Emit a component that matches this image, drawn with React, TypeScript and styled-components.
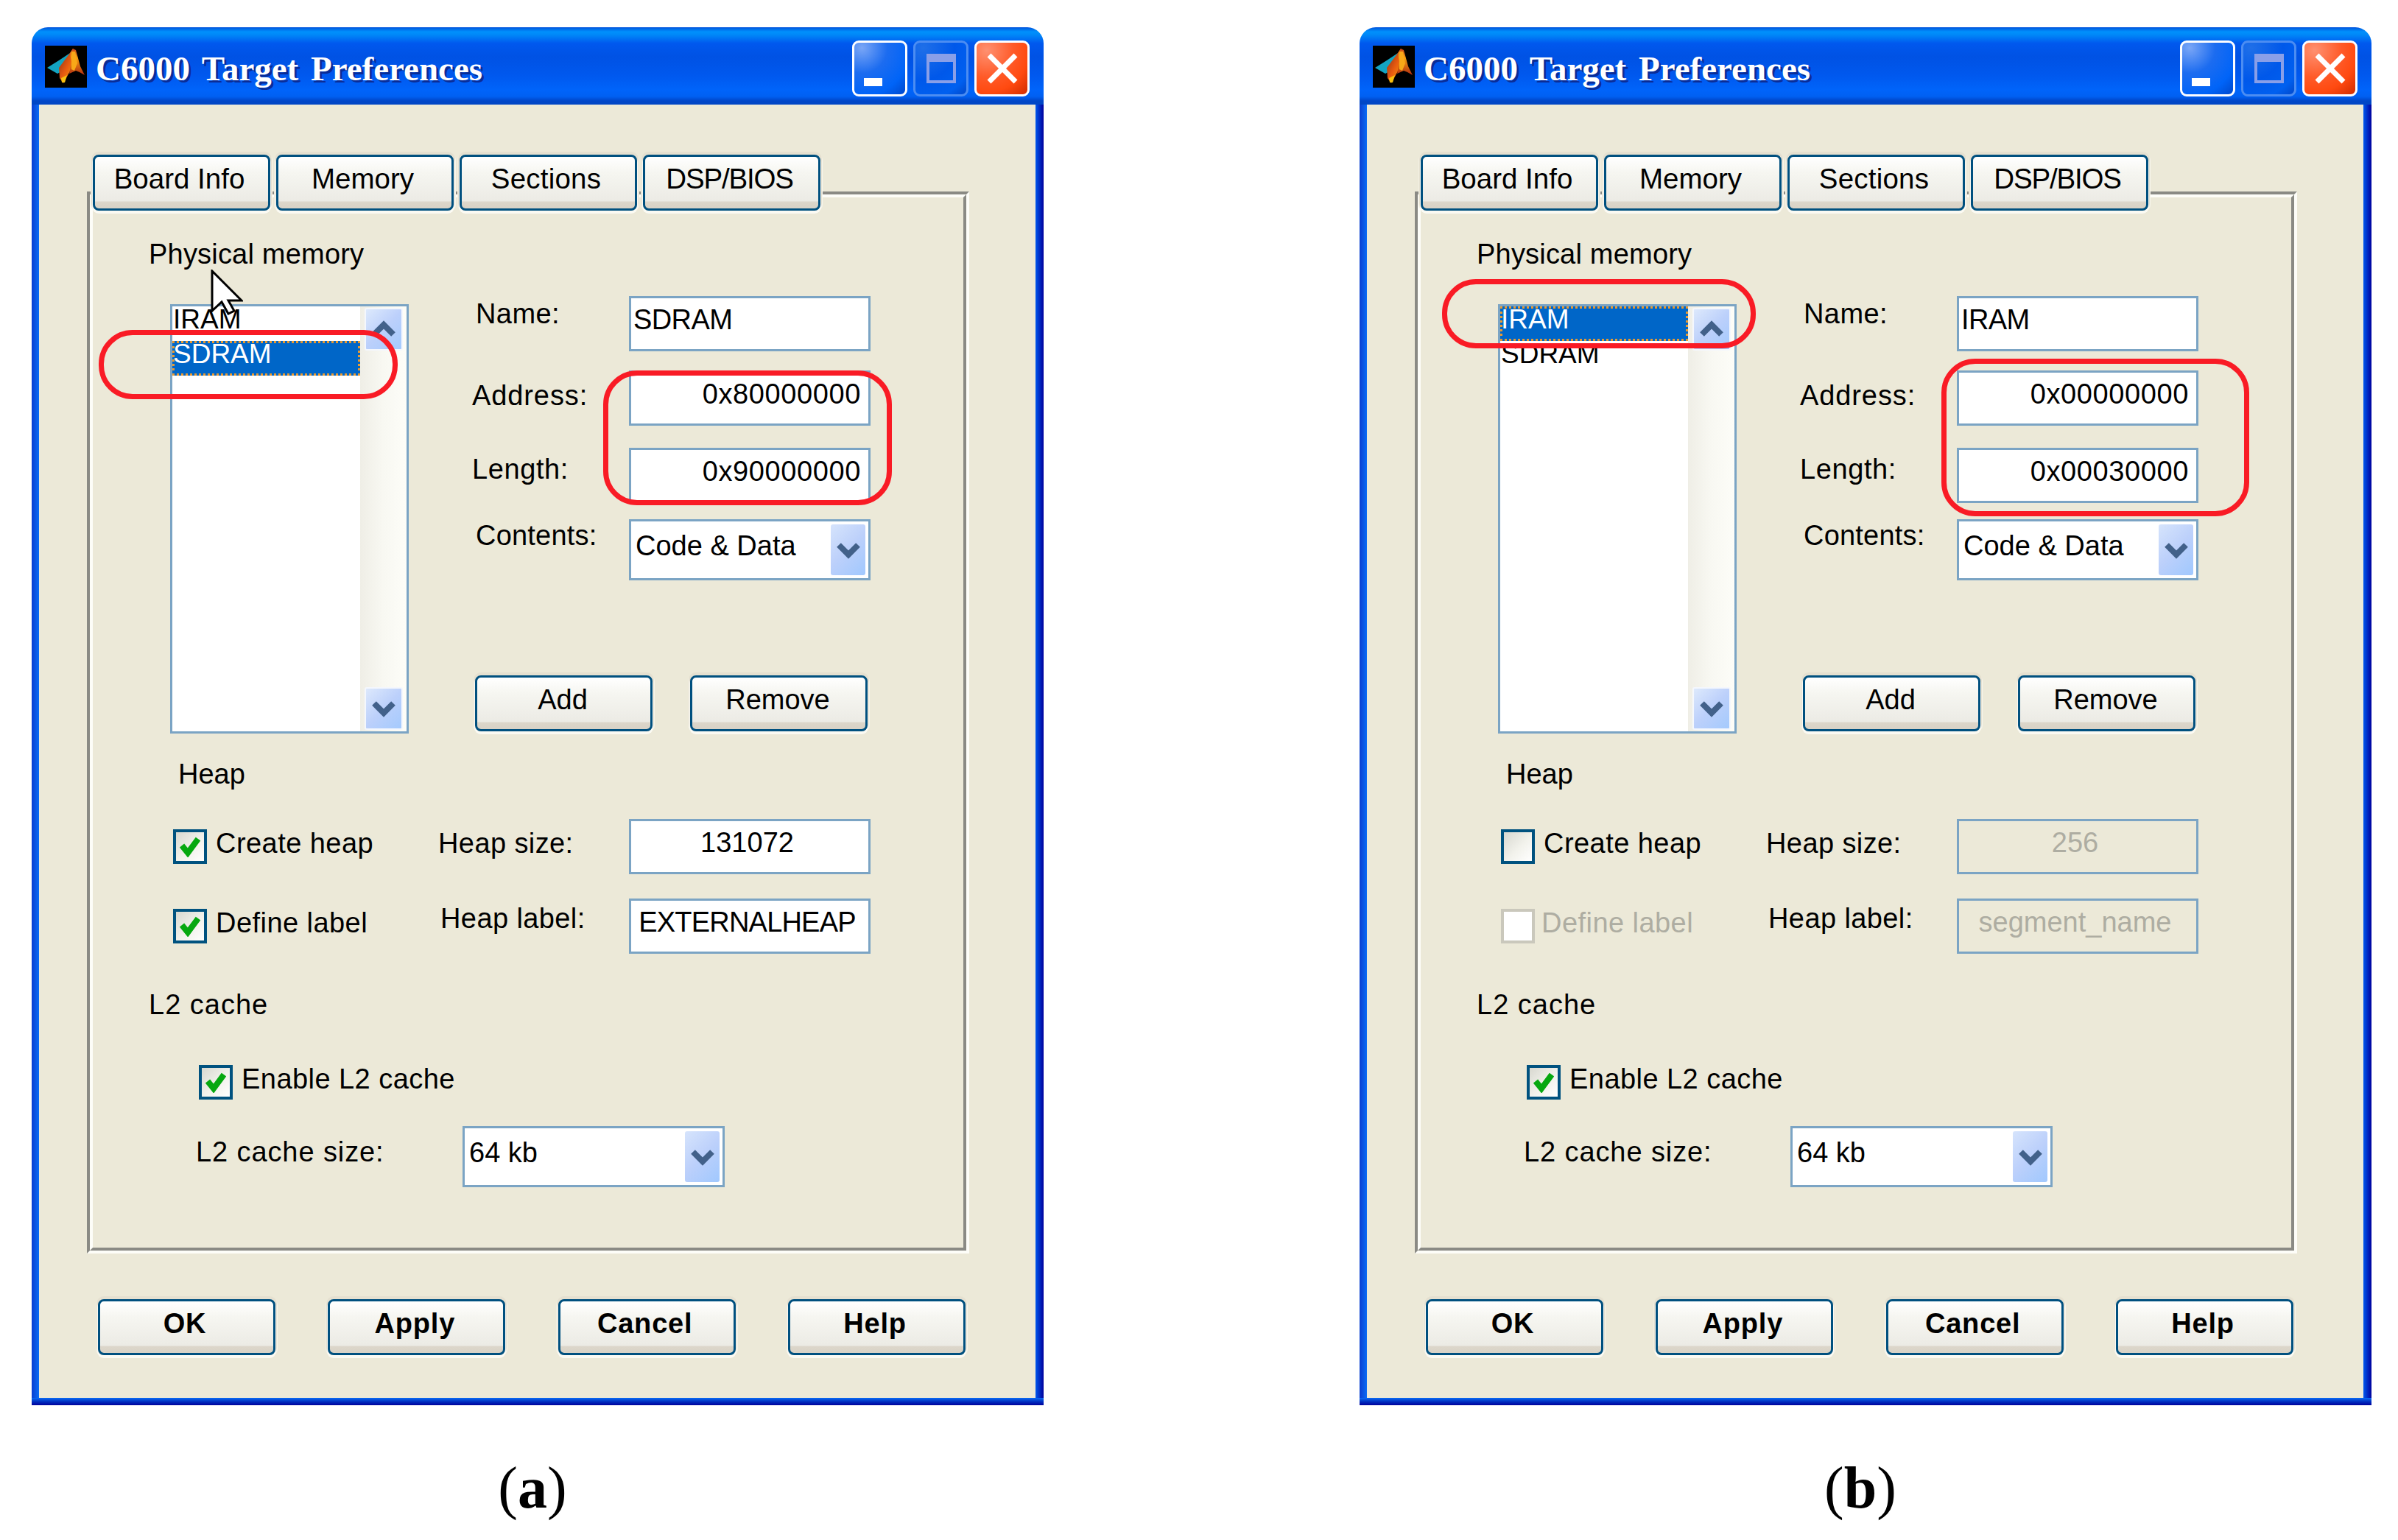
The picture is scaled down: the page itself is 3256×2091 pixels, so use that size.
import React from 'react'
import styled, { createGlobalStyle } from 'styled-components'

const GlobalStyle = createGlobalStyle`
    html, body {
        margin: 0;
        padding: 0;
        background: #fff;
    }
    * {
        box-sizing: border-box;
    }
`;

const Page = styled.div`
    display: flex;
    gap: 429px;
    width: 3256px;
    height: 2091px;
    padding: 37px 0 0 43px;
    overflow: hidden;
    font-family: "Liberation Sans", Arial, sans-serif;
    font-size: 38px;
    line-height: 44px;
    color: #000;
`;

const Figure = styled.div`
    display: flex;
    flex-direction: column;
    align-items: center;
    width: 1374px;
`;

const Caption = styled.div`
    margin: 66px 14px 0 0;
    font-family: "Liberation Serif", "Times New Roman", serif;
    font-size: 80px;
    line-height: 92px;

    b {
        font-weight: bold;
    }
`;

const Window = styled.div`
    position: relative;
    width: 1374px;
    height: 1871px;
    display: flex;
    flex-direction: column;
`;

const TitleBar = styled.div`
    height: 105px;
    flex: none;
    display: flex;
    align-items: center;
    padding: 18px 19px 11px 18px;
    border-radius: 22px 22px 0 0;
    background: linear-gradient(180deg,
        #0052dc 0px, #0090fc 6px, #0089f8 10px, #0058ee 22px, #0052e4 40px,
        #0058ee 65px, #0064fa 85px, #0060f2 94px, #0046c8 100px, #0046c4 105px);
`;

const LogoBox = styled.svg`
    width: 57px;
    height: 57px;
    flex: none;
    margin: -5px 12px 0 0;
`;

const TitleText = styled.div`
    flex: 1;
    font-family: "Liberation Serif", "Times New Roman", serif;
    font-weight: bold;
    font-size: 47px;
    word-spacing: 5px;
    line-height: 52px;
    color: #fff;
    text-shadow: 3px 3px 0 #0a2c96;
    white-space: nowrap;
`;

const CaptionButtons = styled.div`
    display: flex;
    gap: 8px;
`;

const CaptionButton = styled.div<{ $kind: 'min' | 'max' | 'close' }>`
    width: 75px;
    height: 76px;
    border-radius: 9px;
    border: 3px solid ${p => (p.$kind === 'max' ? '#4c8df2' : '#fdfdff')};
    display: flex;
    align-items: center;
    justify-content: center;
    background: ${p => {
        if (p.$kind === 'close') {
            return 'radial-gradient(circle at 20% 15%, #ff9070 0, #ff5a28 45%, #ff4a10 70%, #d02c00 100%)'
        }
        if (p.$kind === 'max') {
            return 'radial-gradient(circle at 15% 10%, #1f6fe8 0, #0058ea 50%, #0060f0 80%, #0048cc 100%)'
        }
        return 'radial-gradient(circle at 15% 10%, #7aa6f6 0, #1c6cf0 40%, #0064f8 75%, #0048cc 100%)'
    }};
`;

const MinGlyph = styled.div`
    width: 25px;
    height: 11px;
    background: #fff;
    margin: 36px 0 0 -18px;
`;

const MaxGlyph = styled.div`
    width: 40px;
    height: 40px;
    border: 4px solid #8a9fe8;
    border-top-width: 11px;
`;

const Frame = styled.div`
    flex: 1;
    display: flex;
    padding: 0 11px 10px 10px;
    background:
        linear-gradient(0deg, #00009c 0, #0030c0 5px, #0a6cf5 10px) bottom / 100% 10px no-repeat,
        linear-gradient(90deg, #0a3ed0, #0a6cf5) left / 10px 100% no-repeat,
        linear-gradient(90deg, #0058ee, #00009c) right / 11px 100% no-repeat;
`;

const Client = styled.div`
    flex: 1;
    background: #ece9d8;
    padding: 68px 0 0 65px;
`;

const TabRow = styled.div`
    position: relative;
    z-index: 1;
    display: flex;
    gap: 8px;
    margin: 0 0 -26px 8px;
`;

const Raised = styled.div<{ $bold?: boolean }>`
    width: 241px;
    height: 76px;
    flex: none;
    display: flex;
    align-items: center;
    justify-content: center;
    padding: 0 ${p => (p.$bold ? 5 : 3)}px 11px 0;
    border: 3px solid #00507f;
    border-radius: 8px;
    font-weight: ${p => (p.$bold ? 'bold' : 'normal')};
    letter-spacing: ${p => (p.$bold ? 0.8 : 0)}px;
    background: linear-gradient(180deg, #ffffff 0, #f6f6f1 30%, #ecebe5 85%, #dcd6ca 88%, #d8d2c6 100%);
    box-shadow: 0 3px 0 1px #fbfaf3, 0 -2px 0 2px #e5e0d0, 3px 0 0 #f7f5ec, -3px 0 0 #f3f0e4;
`;

const Tab = styled(Raised)<{ $spacing?: number }>`
    padding-right: 6px;
    font-size: 38.5px;
    letter-spacing: ${p => p.$spacing ?? 0}px;
`;

const PanelOuter = styled.div`
    width: 1198px;
    height: 1442px;
    border-style: solid;
    border-width: 4px;
    border-color: #8a8a84 #fdfdf8 #fdfdf8 #8a8a84;
`;

const PanelInner = styled.div`
    height: 100%;
    border-style: solid;
    border-width: 4px;
    border-color: #fdfdf8 #8a8a84 #8a8a84 #fdfdf8;
    padding: 55px 0 0 76px;
`;

const SectionLabel = styled.div<{ $indent?: number; $top?: number; $spacing?: number }>`
    margin-left: ${p => p.$indent ?? 0}px;
    margin-top: ${p => p.$top ?? 0}px;
    letter-spacing: ${p => p.$spacing ?? 0.2}px;
`;

const MemoryRow = styled.div`
    display: flex;
    margin-top: 46px;
    height: 583px;
`;

const ListBox = styled.div`
    width: 324px;
    height: 583px;
    margin-left: 29px;
    flex: none;
    display: flex;
    border: 3px solid #7ba4c4;
    background: #fff;
    font-size: 37px;
`;

const ListItems = styled.div`
    width: 255px;
    flex: none;
`;

const ListItem = styled.div<{ $selected?: boolean }>`
    height: 47px;
    display: flex;
    align-items: center;
    padding: 0 0 11px 1px;
    color: ${p => (p.$selected ? '#fff' : '#000')};
    background: ${p => (p.$selected ? '#0066c8' : 'transparent')};
    outline: ${p => (p.$selected ? '3px dotted #ea9a30' : 'none')};
    outline-offset: -3px;
`;

const ScrollTrack = styled.div`
    flex: 1;
    display: flex;
    flex-direction: column;
    justify-content: space-between;
    padding: 2px 3px 2px 6px;
    background: linear-gradient(90deg, #efeee6 0, #f8f8f2 50%, #fdfdf8 100%);
`;

const ArrowBox = styled.div`
    display: flex;
    align-items: center;
    justify-content: center;
    border: 2px solid #f4f7fd;
    border-radius: 3px;
    background: linear-gradient(135deg, #dde9fc 0, #bcd0fb 50%, #a4cafd 100%);
`;

const ScrollButton = styled(ArrowBox)`
    width: 52px;
    height: 58px;
`;

const Chevron = styled.svg`
    width: 32px;
    height: 24px;
    overflow: visible;
`;

const FieldColumn = styled.div`
    margin: -11px 0 0 83px;
    width: 545px;
`;

const FormRow = styled.div<{ $top?: number; $labelWidth: number }>`
    display: grid;
    grid-template-columns: ${p => p.$labelWidth}px 1fr;
    align-items: start;
    margin-top: ${p => p.$top ?? 0}px;
`;

const FieldLabel = styled.div<{ $dx?: number; $dy?: number; $spacing?: number }>`
    margin-left: ${p => p.$dx ?? 0}px;
    margin-top: ${p => p.$dy ?? 0}px;
    letter-spacing: ${p => p.$spacing ?? 0.4}px;
    white-space: nowrap;
`;

const Field = styled.div<{ $align?: string; $disabled?: boolean; $spacing?: number }>`
    width: 328px;
    height: 75px;
    display: flex;
    align-items: center;
    justify-content: ${p => p.$align ?? 'flex-start'};
    padding: 0 10px 11px 3px;
    border: 3px solid #7ba4c4;
    background: ${p => (p.$disabled ? '#ece9d8' : '#fff')};
    color: ${p => (p.$disabled ? '#aeada2' : '#000')};
    letter-spacing: ${p => p.$spacing ?? 0}px;
    white-space: nowrap;
`;

const Combo = styled.div<{ $width: number }>`
    width: ${p => p.$width}px;
    height: 83px;
    display: flex;
    align-items: stretch;
    padding: 4px 4px 4px 6px;
    border: 3px solid #7ba4c4;
    background: #fff;
`;

const ComboText = styled.div`
    flex: 1;
    display: flex;
    align-items: center;
    padding-bottom: 11px;
`;

const ComboArrow = styled(ArrowBox)`
    width: 47px;
    flex: none;
    border: none;
    background: linear-gradient(135deg, #d6e4fc 0, #bcd0fb 50%, #a0c8fe 100%);
`;

const ButtonPair = styled.div`
    display: flex;
    gap: 51px;
    margin: 129px 0 0 7px;
`;

const CheckRow = styled.div<{ $indent: number; $top: number; $width?: number }>`
    display: flex;
    align-items: flex-start;
    margin-left: ${p => p.$indent}px;
    margin-top: ${p => p.$top}px;
    width: ${p => (p.$width ? `${p.$width}px` : 'auto')};
`;

const HeapRow = styled.div<{ $top: number }>`
    display: flex;
    margin-top: ${p => p.$top}px;
`;

const CheckBox = styled.div<{ $disabled?: boolean }>`
    width: 46px;
    height: 47px;
    flex: none;
    display: flex;
    align-items: center;
    justify-content: center;
    border: 4px solid ${p => (p.$disabled ? '#cac8bc' : '#00527f')};
    background: ${p => (p.$disabled ? '#fff' : 'linear-gradient(135deg, #d8d8d0 0, #f2f2ec 55%, #fff 100%)')};
`;

const CheckText = styled.div<{ $disabled?: boolean }>`
    margin: -3px 0 0 ${p => (p.$disabled ? 9 : 12)}px;
    color: ${p => (p.$disabled ? '#aeada2' : '#000')};
    letter-spacing: 0.45px;
    white-space: nowrap;
`;

const BottomButtons = styled.div`
    display: flex;
    justify-content: space-between;
    width: 1178px;
    margin: 62px 0 0 15px;
`;

const RedOutline = styled.div<{ $x: number; $y: number; $w: number; $h: number }>`
    position: absolute;
    z-index: 3;
    left: ${p => p.$x}px;
    top: ${p => p.$y}px;
    width: ${p => p.$w}px;
    height: ${p => p.$h}px;
    border: 7px solid #f91b25;
    border-radius: 46px;
`;

const Cursor = styled.svg`
    position: absolute;
    z-index: 2;
    left: 243px;
    top: 329px;
    width: 44px;
    height: 64px;
`;

function ChevronIcon({ up }: { up?: boolean }) {
    return (
        <Chevron viewBox="0 0 32 24">
            <polyline
                points={up ? '3,19 16,6 29,19' : '3,5 16,18 29,5'}
                fill="none"
                stroke="#42618a"
                strokeWidth="8"
            />
        </Chevron>
    )
}

function Check({ disabled, checked, children }: { disabled?: boolean; checked?: boolean; children: React.ReactNode }) {
    return (
        <>
            <CheckBox $disabled={disabled}>
                {checked ? (
                    <svg width="28" height="28" viewBox="0 0 28 28">
                        <polyline points="3,12 11,22 25,3" fill="none" stroke="#06a810" strokeWidth="8" />
                    </svg>
                ) : null}
            </CheckBox>
            <CheckText $disabled={disabled}>{children}</CheckText>
        </>
    )
}

function Logo() {
    return (
        <LogoBox viewBox="0 0 57 57">
            <defs>
                <linearGradient id="peak" x1="0" y1="0" x2="0" y2="1">
                    <stop offset="0" stopColor="#c8401a" />
                    <stop offset="0.35" stopColor="#f8a010" />
                    <stop offset="1" stopColor="#b02a10" />
                </linearGradient>
                <linearGradient id="body" x1="0" y1="0" x2="1" y2="1">
                    <stop offset="0" stopColor="#7a2a18" />
                    <stop offset="0.5" stopColor="#e85a10" />
                    <stop offset="1" stopColor="#f8b010" />
                </linearGradient>
            </defs>
            <rect width="57" height="57" fill="#000" />
            <polygon points="3,30 19,20 34,10 26,33 17,38" fill="#13a4c2" />
            <polygon points="19,30 34,10 38,4 42,20 30,42 25,51 20,44" fill="url(#body)" />
            <polygon points="34,10 38,4 42,6 48,28 54,40 47,36 42,34 33,38 36,22" fill="url(#peak)" />
            <polygon points="36,8 41,8 44,24 40,34 36,32" fill="#f8a818" />
            <polygon points="22,44 30,40 27,50 23,50" fill="#f8c010" />
        </LogoBox>
    )
}

type DialogProps = {
    selected: 'IRAM' | 'SDRAM';
    address: string;
    length: string;
    heapOn: boolean;
    heapSize: string;
    heapLabel: string;
    listOutline: { x: number; y: number; w: number; h: number };
    valueOutline: { x: number; y: number; w: number; h: number };
    showCursor?: boolean;
};

function Dialog(props: DialogProps) {
    const { selected, address, length, heapOn, heapSize, heapLabel, listOutline, valueOutline, showCursor } = props

    return (
        <Window>
            <TitleBar>
                <Logo />
                <TitleText>C6000 Target Preferences</TitleText>
                <CaptionButtons>
                    <CaptionButton $kind="min"><MinGlyph /></CaptionButton>
                    <CaptionButton $kind="max"><MaxGlyph /></CaptionButton>
                    <CaptionButton $kind="close">
                        <svg width="44" height="44" viewBox="0 0 44 44">
                            <path d="M4 4 L40 40 M40 4 L4 40" stroke="#fff" strokeWidth="7" fill="none" />
                        </svg>
                    </CaptionButton>
                </CaptionButtons>
            </TitleBar>
            <Frame>
                <Client>
                    <TabRow>
                        <Tab>Board Info</Tab>
                        <Tab>Memory</Tab>
                        <Tab $spacing={0.2}>Sections</Tab>
                        <Tab $spacing={-1.2}>DSP/BIOS</Tab>
                    </TabRow>
                    <PanelOuter>
                        <PanelInner>
                            <SectionLabel>Physical memory</SectionLabel>
                            <MemoryRow>
                                <ListBox>
                                    <ListItems>
                                        <ListItem $selected={selected === 'IRAM'}>IRAM</ListItem>
                                        <ListItem $selected={selected === 'SDRAM'}>SDRAM</ListItem>
                                    </ListItems>
                                    <ScrollTrack>
                                        <ScrollButton><ChevronIcon up /></ScrollButton>
                                        <ScrollButton><ChevronIcon /></ScrollButton>
                                    </ScrollTrack>
                                </ListBox>
                                <FieldColumn>
                                    <FormRow $labelWidth={216}>
                                        <FieldLabel $dx={8} $dy={2}>Name:</FieldLabel>
                                        <Field $spacing={-0.6}>{selected}</Field>
                                    </FormRow>
                                    <FormRow $labelWidth={216} $top={26}>
                                        <FieldLabel $dx={3} $dy={12} $spacing={0.9}>Address:</FieldLabel>
                                        <Field $align="flex-end" $spacing={0.6}>{address}</Field>
                                    </FormRow>
                                    <FormRow $labelWidth={216} $top={30}>
                                        <FieldLabel $dx={3} $dy={7} $spacing={0.6}>Length:</FieldLabel>
                                        <Field $align="flex-end" $spacing={0.6}>{length}</Field>
                                    </FormRow>
                                    <FormRow $labelWidth={216} $top={22}>
                                        <FieldLabel $dx={8} $dy={0} $spacing={0.2}>Contents:</FieldLabel>
                                        <Combo $width={328}>
                                            <ComboText>Code &amp; Data</ComboText>
                                            <ComboArrow><ChevronIcon /></ComboArrow>
                                        </Combo>
                                    </FormRow>
                                    <ButtonPair>
                                        <Raised>Add</Raised>
                                        <Raised>Remove</Raised>
                                    </ButtonPair>
                                </FieldColumn>
                            </MemoryRow>
                            <SectionLabel $indent={40} $top={33} $spacing={0}>Heap</SectionLabel>
                            <HeapRow $top={39}>
                                <CheckRow $indent={33} $top={14} $width={359}>
                                    <Check checked={heapOn}>Create heap</Check>
                                </CheckRow>
                                <FormRow $labelWidth={260}>
                                    <FieldLabel $dx={1} $dy={11}>Heap size:</FieldLabel>
                                    <Field $align="center" $disabled={!heapOn}>{heapSize}</Field>
                                </FormRow>
                            </HeapRow>
                            <HeapRow $top={33}>
                                <CheckRow $indent={33} $top={14} $width={359}>
                                    <Check checked={heapOn} disabled={!heapOn}>Define label</Check>
                                </CheckRow>
                                <FormRow $labelWidth={260}>
                                    <FieldLabel $dx={4} $dy={5}>Heap label:</FieldLabel>
                                    <Field $align="center" $disabled={!heapOn} $spacing={heapOn ? -0.8 : 0}>{heapLabel}</Field>
                                </FormRow>
                            </HeapRow>
                            <SectionLabel $top={47} $spacing={1}>L2 cache</SectionLabel>
                            <CheckRow $indent={68} $top={60}>
                                <Check checked>Enable L2 cache</Check>
                            </CheckRow>
                            <FormRow $labelWidth={426} $top={36}>
                                <FieldLabel $dx={64} $dy={13} $spacing={0.9}>L2 cache size:</FieldLabel>
                                <Combo $width={356}>
                                    <ComboText>64 kb</ComboText>
                                    <ComboArrow><ChevronIcon /></ComboArrow>
                                </Combo>
                            </FormRow>
                        </PanelInner>
                    </PanelOuter>
                    <BottomButtons>
                        <Raised $bold>OK</Raised>
                        <Raised $bold>Apply</Raised>
                        <Raised $bold>Cancel</Raised>
                        <Raised $bold>Help</Raised>
                    </BottomButtons>
                </Client>
            </Frame>
            <RedOutline $x={listOutline.x} $y={listOutline.y} $w={listOutline.w} $h={listOutline.h} />
            <RedOutline $x={valueOutline.x} $y={valueOutline.y} $w={valueOutline.w} $h={valueOutline.h} />
            {showCursor ? (
                <Cursor viewBox="0 0 44 64">
                    <polygon
                        points="2,2 2,56 15,44 24,60 32,56 24,42 42,42"
                        fill="#fff"
                        stroke="#000"
                        strokeWidth="3"
                    />
                </Cursor>
            ) : null}
        </Window>
    )
}

export default function App() {
    return (
        <Page>
            <GlobalStyle />
            <Figure>
                <Dialog
                    selected="SDRAM"
                    address="0x80000000"
                    length="0x90000000"
                    heapOn
                    heapSize="131072"
                    heapLabel="EXTERNALHEAP"
                    listOutline={{ x: 91, y: 411, w: 406, h: 94 }}
                    valueOutline={{ x: 776, y: 466, w: 392, h: 183 }}
                    showCursor
                />
                <Caption>(<b>a</b>)</Caption>
            </Figure>
            <Figure>
                <Dialog
                    selected="IRAM"
                    address="0x00000000"
                    length="0x00030000"
                    heapOn={false}
                    heapSize="256"
                    heapLabel="segment_name"
                    listOutline={{ x: 112, y: 342, w: 426, h: 94 }}
                    valueOutline={{ x: 790, y: 450, w: 418, h: 214 }}
                />
                <Caption>(<b>b</b>)</Caption>
            </Figure>
        </Page>
    )
}
